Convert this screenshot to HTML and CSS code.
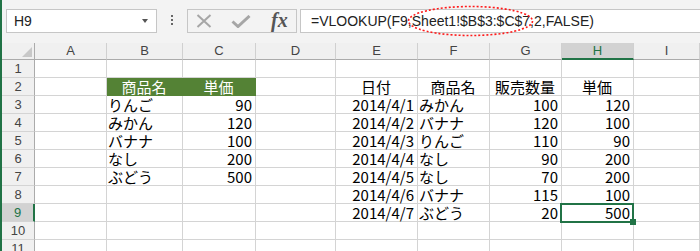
FILE: index.html
```html
<!DOCTYPE html>
<html lang="ja">
<head>
<meta charset="utf-8">
<title>VLOOKUP</title>
<link rel="stylesheet" href="styles.css">
</head>
<body>
<div class="app">
  <div class="fbar">
    <div class="namebox">H9<span class="caret"></span></div>
    <div class="dots"><i></i><i></i><i></i></div>
    <div class="btns">
      <svg class="ico-x" width="16" height="14" viewBox="0 0 16 14"><path d="M1.5 1 L14.5 13 M14.5 1 L1.5 13" stroke="#a6a6a6" stroke-width="2" fill="none"/></svg>
      <svg class="ico-ok" width="20" height="13" viewBox="0 0 20 13"><path d="M1.5 6.5 L7 11.5 L18.5 1" stroke="#a6a6a6" stroke-width="3" fill="none"/></svg>
      <span class="fx">fx</span>
    </div>
    <div class="formula">=VLOOKUP(F9,Sheet1!$B$3:$C$7,2,FALSE)</div>
    <svg class="mark" width="127" height="32" viewBox="0 0 127 32"><ellipse cx="63.5" cy="16" rx="62" ry="14.5" fill="none" stroke="#ff1a1a" stroke-width="1.6" stroke-dasharray="2 2"/></svg>
  </div>
  <div class="sheet">
    <div class="corner"></div>
    <div class="ch">A</div><div class="ch">B</div><div class="ch">C</div><div class="ch">D</div><div class="ch">E</div><div class="ch">F</div><div class="ch">G</div><div class="ch selh">H</div><div class="ch">I</div>

    <div class="rh">1</div><div class="cl"></div><div class="cl"></div><div class="cl"></div><div class="cl"></div><div class="cl"></div><div class="cl"></div><div class="cl"></div><div class="cl"></div><div class="cl"></div>

    <div class="rh">2</div><div class="cl"></div><div class="cl fill c">商品名</div><div class="cl fill c">単価</div><div class="cl"></div><div class="cl c">日付</div><div class="cl c">商品名</div><div class="cl c">販売数量</div><div class="cl c">単価</div><div class="cl"></div>

    <div class="rh">3</div><div class="cl"></div><div class="cl">りんご</div><div class="cl r">90</div><div class="cl"></div><div class="cl r">2014/4/1</div><div class="cl">みかん</div><div class="cl r">100</div><div class="cl r">120</div><div class="cl"></div>

    <div class="rh">4</div><div class="cl"></div><div class="cl">みかん</div><div class="cl r">120</div><div class="cl"></div><div class="cl r">2014/4/2</div><div class="cl">バナナ</div><div class="cl r">120</div><div class="cl r">100</div><div class="cl"></div>

    <div class="rh">5</div><div class="cl"></div><div class="cl">バナナ</div><div class="cl r">100</div><div class="cl"></div><div class="cl r">2014/4/3</div><div class="cl">りんご</div><div class="cl r">110</div><div class="cl r">90</div><div class="cl"></div>

    <div class="rh">6</div><div class="cl"></div><div class="cl">なし</div><div class="cl r">200</div><div class="cl"></div><div class="cl r">2014/4/4</div><div class="cl">なし</div><div class="cl r">90</div><div class="cl r">200</div><div class="cl"></div>

    <div class="rh">7</div><div class="cl"></div><div class="cl">ぶどう</div><div class="cl r">500</div><div class="cl"></div><div class="cl r">2014/4/5</div><div class="cl">なし</div><div class="cl r">70</div><div class="cl r">200</div><div class="cl"></div>

    <div class="rh">8</div><div class="cl"></div><div class="cl"></div><div class="cl"></div><div class="cl"></div><div class="cl r">2014/4/6</div><div class="cl">バナナ</div><div class="cl r">115</div><div class="cl r">100</div><div class="cl"></div>

    <div class="rh selr">9</div><div class="cl"></div><div class="cl"></div><div class="cl"></div><div class="cl"></div><div class="cl r">2014/4/7</div><div class="cl">ぶどう</div><div class="cl r">20</div><div class="cl r sel">500<span class="handle"></span></div><div class="cl"></div>

    <div class="rh">10</div><div class="cl"></div><div class="cl"></div><div class="cl"></div><div class="cl"></div><div class="cl"></div><div class="cl"></div><div class="cl"></div><div class="cl"></div><div class="cl"></div>

    <div class="rh">11</div><div class="cl"></div><div class="cl"></div><div class="cl"></div><div class="cl"></div><div class="cl"></div><div class="cl"></div><div class="cl"></div><div class="cl"></div><div class="cl"></div>
  </div>
</div>
</body>
</html>
```
FILE: styles.css
```css
* { box-sizing: border-box; margin: 0; padding: 0; }
html, body { width: 700px; height: 251px; overflow: hidden; background: #fff; }
body { font-family: "Noto Sans CJK JP", "Noto Sans", sans-serif; color: #000; }

.app { border-left: 2px solid #217346; height: 251px; overflow: hidden; }

.fbar {
  position: relative;
  height: 43px;
  background: #f3f3f3;
  display: flex;
  align-items: flex-start;
  padding: 9px 0 0 4px;
}
.namebox {
  position: relative;
  width: 151px;
  height: 24px;
  background: #fff;
  border: 1px solid #c6c6c6;
  display: flex;
  align-items: center;
  padding-left: 7px;
  font: 14px "Liberation Sans", sans-serif;
  color: #222;
}
.caret {
  position: absolute;
  right: 8px;
  top: 9px;
  width: 0; height: 0;
  border-left: 3.5px solid transparent;
  border-right: 3.5px solid transparent;
  border-top: 4px solid #555;
}
.dots {
  margin-left: 14px;
  width: 3px;
  padding-top: 6px;
  display: flex;
  flex-direction: column;
  gap: 2px;
}
.dots i { display: block; width: 2px; height: 2px; background: #666; }
.btns {
  margin-left: 13px;
  width: 110px;
  height: 24px;
  border: 1px solid #c6c6c6;
  display: flex;
  align-items: center;
  padding-left: 8px;
}
.ico-ok { margin-left: 19px; }
.fx {
  margin-left: 20px;
  font: italic bold 20px "Liberation Serif", serif;
  color: #555;
  line-height: 20px;
  margin-top: -2px;
}
.formula {
  flex: 1;
  margin-left: 3px;
  margin-right: -10px;
  height: 24px;
  background: #fff;
  border: 1px solid #c6c6c6;
  padding-left: 10px;
  font: 14px "Liberation Sans", sans-serif;
  line-height: 22px;
  color: #222;
  white-space: nowrap;
}
.mark { position: absolute; left: 405px; top: 5px; }

.sheet {
  display: grid;
  grid-template-columns: 33px 72px 76px 73px 80px 82px 72px 72px 72px 66px;
  grid-template-rows: 17px repeat(11, 18px);
}
.corner {
  position: relative;
  background: #f0f0f0;
  border-right: 1px solid #ababab;
  border-bottom: 1px solid #ababab;
}
.corner::after {
  content: "";
  position: absolute;
  right: 2px;
  bottom: 2px;
  width: 0; height: 0;
  border-left: 10px solid transparent;
  border-bottom: 10px solid #c8c8c8;
}
.ch {
  background: #f0f0f0;
  border-right: 1px solid #d0d0d0;
  border-bottom: 1px solid #ababab;
  font: 13px "Liberation Sans", sans-serif;
  line-height: 16px;
  text-align: center;
  color: #444;
}
.ch.selh {
  background: #d2d2d2;
  color: #217346;
  border-bottom: 2px solid #217346;
}
.rh {
  background: #f0f0f0;
  border-right: 1px solid #ababab;
  border-bottom: 1px solid #d4d4d4;
  font: 13px "Liberation Sans", sans-serif;
  line-height: 18px;
  text-align: center;
  color: #444;
}
.rh.selr {
  background: #d2d2d2;
  color: #217346;
  border-right: 2px solid #217346;
}
.cl {
  border-right: 1px solid #d4d4d4;
  border-bottom: 1px solid #d4d4d4;
  font-size: 15px;
  line-height: 17px;
  padding: 0 2px 0 1px;
  white-space: nowrap;
  overflow: visible;
}
.cl.r { text-align: right; padding-right: 3px; }
.cl.c { text-align: center; }
.cl.fill {
  background: #548235;
  color: #fff;
  border-right-color: #548235;
  border-bottom-color: #548235;
}
.cl.sel { position: relative; z-index: 2; }
.cl.sel::after {
  content: "";
  position: absolute;
  left: -2px; top: -1px; right: -1px; bottom: -2px;
  border: 2px solid #217346;
}
.handle {
  position: absolute;
  right: -3px;
  bottom: -4px;
  width: 6px;
  height: 6px;
  background: #217346;
  z-index: 3;
}
```
